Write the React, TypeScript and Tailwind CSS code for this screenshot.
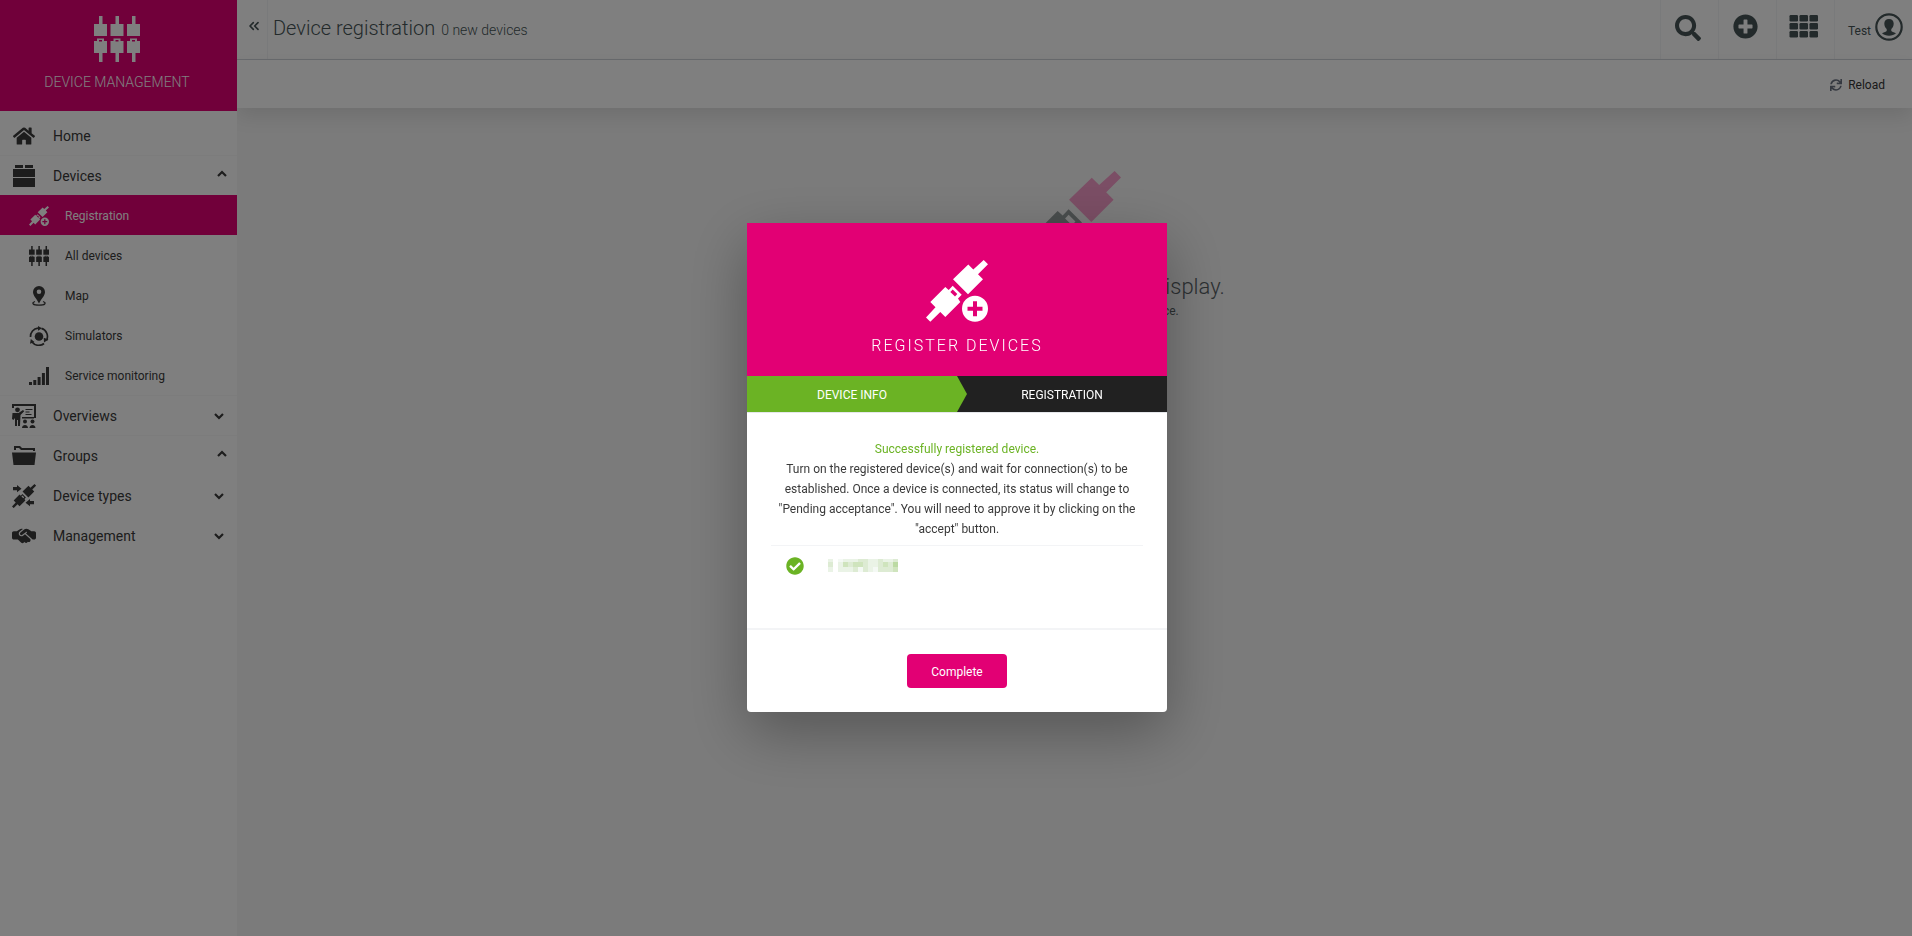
import type { ReactNode } from "react";
import { FaCheckCircle, FaHome, FaPlusCircle, FaSearch, FaSync } from "react-icons/fa";
import { FaHandshakeSimple } from "react-icons/fa6";
import { ChevronsLeft } from "lucide-react";

const PLUG_TOP = "M57.7 0L62 4.3 52 14.3 57 19.3 42 34.3 27 19.3 42.3 4.5 47.3 9.5z";
const PLUG_BOTTOM =
  "M19.3 27L22.7 30 26.7 25.7 35.7 34.7 32 38.6 34.3 42 19.3 57 14.3 52 4.3 61.7 0 57.5 9.5 47.3 4.3 42zM26.7 29.5L24.3 32 29 36.5 31.3 34z";
const CABLE =
  "M5 0h3.5v8H13v12H0V8h5zM3 22.5h7V25h3v12H8.5v9H5v-9H0V25h3zM5 24v1.5h3V24z";

function PlugIcon({ className, topClass = "" }: { className: string; topClass?: string }) {
  return (
    <svg viewBox="0 0 62 62" className={className} fill="currentColor" fillRule="evenodd">
      <path d={PLUG_TOP} className={topClass} />
      <path d={PLUG_BOTTOM} />
    </svg>
  );
}

function PlugAddIcon({ className }: { className: string }) {
  return (
    <svg viewBox="0 0 62 62" className={className} fill="currentColor" fillRule="evenodd">
      <path d={PLUG_TOP} />
      <path d={PLUG_BOTTOM} />
      <path d="M49 35.7a13 13 0 1 0 0 26 13 13 0 1 0 0-26zM47 41.2h4v5.5h5.5v4H51v5.5h-4v-5.5h-5.5v-4H47z" />
    </svg>
  );
}

function CablesIcon({ className }: { className: string }) {
  return (
    <svg viewBox="0 0 46 46" className={className} fill="currentColor" fillRule="evenodd">
      <path d={CABLE} />
      <path d={CABLE} transform="translate(16.5 0)" />
      <path d={CABLE} transform="translate(33 0)" />
    </svg>
  );
}

function BoxIcon() {
  return (
    <svg viewBox="0 0 24 24" className="h-6 w-6" fill="currentColor">
      <path d="M3 1h8v3H3zM13 1h8v3h-8zM1 5h22v8H1zM1 14h22v9H1z" />
    </svg>
  );
}

function PinIcon() {
  return (
    <svg viewBox="0 0 20 20" className="h-5 w-5" fill="currentColor" fillRule="evenodd">
      <path d="M10 0a6 6 0 0 0-6 6c0 3.6 3.5 6.5 6 11.5 2.5-5 6-7.9 6-11.5a6 6 0 0 0-6-6zM10 3.5a2.3 2.3 0 1 0 0 4.6 2.3 2.3 0 1 0 0-4.6z" />
      <path d="M6 15.5c-4 1.500-2 3.700 4 3.700s8-2.200 4-3.700" fill="none" stroke="currentColor" strokeWidth="1.3" />
    </svg>
  );
}

function SimulatorIcon() {
  return (
    <svg viewBox="0 0 20 20" className="h-5 w-5" fill="currentColor">
      <circle cx="10" cy="10.5" r="4.3" />
      <g fill="none" stroke="currentColor" strokeWidth="1.7">
        <path d="M1.500 11a8.500 8.500 0 0 1 7.500-8.900" />
        <path d="M12.500 2.400a8.500 8.500 0 0 1 5 12" />
        <path d="M15 17.500a8.500 8.500 0 0 1-12-1.500" />
      </g>
      <path d="M9 0l4 2.300-4 2.500zM19.500 13.500l-4.500 3-.3-4.800zM1 17.800l.8-4.800 3.700 3z" />
    </svg>
  );
}

function SignalIcon() {
  return (
    <svg viewBox="0 0 20 20" className="h-5 w-5" fill="currentColor">
      <path d="M0 16h3v3H0zM4.300 14h3v5h-3zM8.600 11h3v8h-3zM12.900 7h3v12h-3zM17 1h3v18h-3z" />
    </svg>
  );
}

function OverviewIcon() {
  return (
    <svg viewBox="0 0 24 24" className="h-6 w-6" fill="currentColor">
      <path d="M0 0h24v14h-2V2H2v2H0zM13.500 5h7v1h-7zM13.500 7.500h4v1h-4zM13.500 10h6v1h-6z" />
      <circle cx="5.5" cy="5.8" r="2.4" />
      <path d="M.5 9h6l4.500-3 1.200 1.200L8.500 11l-.5 11H6v-6H5v6H3v-8l-1.500 2L0 15z" />
      <circle cx="13" cy="17.5" r="2" />
      <circle cx="20.5" cy="17.5" r="2" />
      <path d="M10 24c0-4 6-4 6 0zM17.500 24c0-4 6-4 6 0zM10 13h12v1.500H10z" />
    </svg>
  );
}

function FolderIcon() {
  return (
    <svg viewBox="0 0 24 24" className="h-6 w-6" fill="currentColor">
      <path d="M2 6V2h6l2 2h13v3h-2V6H9L7 4H4v2zM0 8.500h24L22.500 21h-21z" />
    </svg>
  );
}

function DeviceTypesIcon() {
  return (
    <svg viewBox="0 0 24 24" className="h-6 w-6" fill="currentColor" fillRule="evenodd">
      <g transform="scale(.39)">
        <path d={PLUG_TOP} />
        <path d={PLUG_BOTTOM} />
      </g>
      <path d="M1 3h4V1l4.500 3.700L5 8.300v-2H1zM22 17h-4v-2l-4.500 3.700 4.500 3.600v-2h4z" />
    </svg>
  );
}

function UserIcon() {
  return (
    <svg viewBox="0 0 28 28" className="h-7 w-7" fill="currentColor">
      <circle cx="14" cy="14" r="12.7" fill="none" stroke="currentColor" strokeWidth="2.2" />
      <path d="M14 6c-3 0-4.700 1.800-4.700 4.500 0 2.500 1 4.500 2.400 5.500v2c-1.200 1.200-3.500 1.200-4.700 2.300 3 3.200 11 3.200 14 0-1.200-1.100-3.500-1.100-4.700-2.300v-2c1.400-1 2.400-3 2.400-5.500C18.700 7.800 17 6 14 6z" />
    </svg>
  );
}

function AppsIcon() {
  return (
    <svg viewBox="0 0 29 23" className="w-[29px]" fill="currentColor">
      {[0, 8, 16].map((y) =>
        [0, 10, 20].map((x) => <rect key={`${x}-${y}`} x={x + 0.5} y={y} width="8.5" height="6.5" rx="1.2" />)
      )}
    </svg>
  );
}

function Caret({ open }: { open: boolean }) {
  return (
    <svg
      viewBox="0 0 10 8"
      className={open ? "mr-[10px] mb-1 h-2 w-[10px]" : "mr-[13px] h-2 w-[10px]"}
      fill="none"
      stroke="currentColor"
      strokeWidth="2.2"
    >
      <path d={open ? "M1 6l4-4 4 4" : "M1 2l4 4 4-4"} />
    </svg>
  );
}

type NavItem = {
  label: string;
  icon: ReactNode;
  open?: boolean;
  divider?: boolean;
  children?: { label: string; icon: ReactNode; active?: boolean }[];
};

const navItems: NavItem[] = [
  { label: "Home", icon: <FaHome size={22} />, divider: true },
  {
    label: "Devices",
    icon: <BoxIcon />,
    open: true,
    divider: true,
    children: [
      { label: "Registration", icon: <PlugAddIcon className="h-5 w-5" />, active: true },
      { label: "All devices", icon: <CablesIcon className="h-5 w-5" /> },
      { label: "Map", icon: <PinIcon /> },
      { label: "Simulators", icon: <SimulatorIcon /> },
      { label: "Service monitoring", icon: <SignalIcon /> },
    ],
  },
  { label: "Overviews", icon: <OverviewIcon />, open: false, divider: true },
  { label: "Groups", icon: <FolderIcon />, open: true },
  { label: "Device types", icon: <DeviceTypesIcon />, open: false },
  { label: "Management", icon: <FaHandshakeSimple size={24} />, open: false },
];

function Sidebar() {
  return (
    <aside className="z-10 w-[237px] shrink-0 bg-white text-[#3a3a3a]">
      <div className="flex h-[111px] flex-col items-center bg-[#e20074] pt-4 pr-[3px] text-white">
        <CablesIcon className="h-[46px] w-[46px]" />
        <span className="mt-[10px] text-sm font-light">DEVICE MANAGEMENT</span>
      </div>
      <nav className="pt-[5px]">
        {navItems.map((item) => (
          <div key={item.label} className={item.divider ? "border-b border-[#f8f8f8]" : ""}>
            <button className={`flex w-full items-center pl-3 text-left text-sm ${item.divider ? "h-[39px]" : "h-10"}`}>
              <span className="flex w-6 justify-center">{item.icon}</span>
              <span className="ml-[17px] flex-1">{item.label}</span>
              {item.open !== undefined && <Caret open={item.open} />}
            </button>
            {item.children?.map((child) => (
              <a
                key={child.label}
                href="#"
                className={`flex h-10 items-center gap-4 pt-px pl-[29px] text-xs ${child.active ? "bg-[#e20074] text-white" : ""}`}
              >
                {child.icon}
                {child.label}
              </a>
            ))}
          </div>
        ))}
      </nav>
    </aside>
  );
}

function Header() {
  return (
    <header className="flex h-[60px] border-b border-gray-300 bg-white text-[#465456]">
      <button
        aria-label="Collapse menu"
        className="flex w-[31px] items-center justify-center border-r border-gray-100 pb-2 pl-1"
      >
        <ChevronsLeft size={16} strokeWidth={2.5} />
      </button>
      <div className="flex flex-1 items-baseline gap-[6px] pt-3 pl-[5px] font-light">
        <h1 className="text-[20px] leading-8">Device registration</h1>
        <span className="text-sm">0 new devices</span>
      </div>
      <div className="flex">
        <button aria-label="Search" className="flex w-[58px] items-center justify-center border-l border-gray-100 pr-1 pb-1">
          <FaSearch size={26} />
        </button>
        <button aria-label="Add" className="flex w-[58px] items-center justify-center border-l border-gray-100 pr-1 pb-[6px]">
          <FaPlusCircle size={25} />
        </button>
        <button
          aria-label="Applications"
          className="flex w-[58px] items-center justify-center border-l border-gray-100 pr-1 pb-[6px]"
        >
          <AppsIcon />
        </button>
        <button className="flex w-[78px] items-center justify-center gap-1 border-l border-gray-100 pb-[6px] pl-1 text-xs">
          <span className="pt-2">Test</span>
          <UserIcon />
        </button>
      </div>
    </header>
  );
}

// Pixelated device id: one string per row, one digit per 5px cell, index into the shades
const shades = ["#ffffff", "#f4f9f4", "#eaf3e6", "#ddebd3", "#cfe4bd", "#bcdaa3"];
const idRows = ["20122233223223", "30243443223435", "20222313213334"];
const idRowTops = [0, 3, 8];

function DeviceId() {
  return (
    <svg width="70" height="13" viewBox="0 0 70 13" shapeRendering="crispEdges" role="img" aria-label="Device id">
      {idRows.map((row, r) =>
        row.split("").map((shade, c) => (
          <rect key={`${r}-${c}`} x={c * 5} y={idRowTops[r]} width="5" height={r === 0 ? 3 : 5} fill={shades[Number(shade)]} />
        ))
      )}
    </svg>
  );
}

function RegisterModal() {
  return (
    <div
      role="dialog"
      aria-label="Register devices"
      className="w-[420px] overflow-hidden rounded-b bg-white shadow-[0_20px_60px_rgba(0,0,0,0.3)]"
    >
      <div className="flex h-[153px] flex-col items-center bg-[#e20074] pt-[37px] text-white">
        <PlugAddIcon className="h-[62px] w-[62px]" />
        <h2 className="mt-3 text-base font-light tracking-[2px]">REGISTER DEVICES</h2>
      </div>
      <ol className="flex h-[37px] border-b border-gray-200 bg-[#212121] text-xs text-white">
        <li className="relative flex w-1/2 items-center justify-center bg-[#6bb324] pt-0.5">
          DEVICE INFO
          <svg viewBox="0 0 10 36" className="absolute top-0 left-full h-full w-[10px]" preserveAspectRatio="none" fill="#6bb324">
            <path d="M0 0l10 18L0 36z" />
          </svg>
        </li>
        <li className="flex w-1/2 items-center justify-center pt-0.5">REGISTRATION</li>
      </ol>
      <div className="px-6 pt-[26px] pb-[53px]">
        <div className="pb-[6px] text-center text-xs leading-5 text-[#3a3a3a]">
          <p className="text-[#6bb324]">Successfully registered device.</p>
          <p>
            Turn on the registered device(s) and wait for connection(s) to be established. Once a device is connected, its
            status will change to "Pending acceptance". You will need to approve it by clicking on the "accept" button.
          </p>
        </div>
        <div className="flex items-center gap-6 border-t border-gray-100 pt-[11px] pl-[15px]">
          <FaCheckCircle size={18} className="text-[#6bb324]" />
          <DeviceId />
        </div>
      </div>
      <div className="flex justify-center border-t-2 border-gray-100 py-6">
        <button className="h-[34px] w-[100px] rounded bg-[#e20074] pt-0.5 text-xs text-white">Complete</button>
      </div>
    </div>
  );
}

export default function App() {
  return (
    <div className="flex min-h-screen bg-[#f6f6f6] font-['Roboto',sans-serif]">
      <Sidebar />
      <div className="flex min-w-0 flex-1 flex-col">
        <Header />
        <div className="flex h-12 items-center justify-end bg-white pt-px pr-[27px] shadow-[0_8px_20px_rgba(0,0,0,0.1)]">
          <button className="flex items-center gap-[6px] text-xs text-[#333]">
            <FaSync size={12} className="text-gray-500" />
            Reload
          </button>
        </div>
        <main className="flex flex-col items-center pt-[63px] text-[#586064]">
          <PlugIcon className="h-[92px] w-[92px] text-[#949c9c]" topClass="fill-[#f79cca]" />
          <h2 className="mt-2 text-[22px] leading-8 font-light">There are no devices to display.</h2>
          <p className="text-xs">Click below to register your first device.</p>
        </main>
      </div>

      <div className="fixed inset-0 z-20 flex items-center justify-center bg-black/50 pb-0.5 pl-0.5">
        <RegisterModal />
      </div>
    </div>
  );
}
